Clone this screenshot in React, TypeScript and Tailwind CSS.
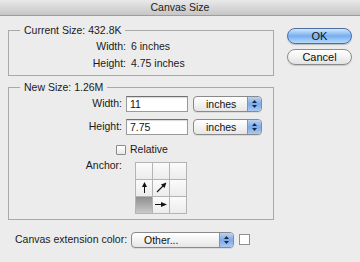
import React from 'react';

const font = { fontFamily: '"Liberation Sans", Arial, sans-serif' };

const SelectBox = ({ label, width }: { label: string; width: string }) => (
    <div
        className={`${width} h-[16px] flex items-stretch rounded-[4px] border border-[#8a8a8a] bg-gradient-to-b from-white to-[#e6e6e6] overflow-hidden shadow-[0_1px_0_rgba(0,0,0,0.08)]`}
    >
        <div className="flex-1 pl-[12px] leading-[14px] text-[#111]">{label}</div>
        <div className="w-[14px] border-l border-[#7c93b8] bg-gradient-to-b from-[#b9d3f3] via-[#7ea9e6] to-[#a9c9f2] flex flex-col items-center justify-center gap-[2px]">
            <svg width="5" height="3" viewBox="0 0 5 3">
                <path d="M0 3 L2.5 0 L5 3 Z" fill="#1b2a44" />
            </svg>
            <svg width="5" height="3" viewBox="0 0 5 3">
                <path d="M0 0 L2.5 3 L5 0 Z" fill="#1b2a44" />
            </svg>
        </div>
    </div>
);

const TextInput = ({ value }: { value: string }) => (
    <div className="w-[62px] h-[16px] border border-[#9a9a9a] border-t-[#6f6f6f] bg-white pl-[3px] leading-[14px] text-[#111] shadow-[inset_0_1px_1px_rgba(0,0,0,0.15)]">
        {value}
    </div>
);

const Cell = ({ children, shaded }: { children?: React.ReactNode; shaded?: boolean }) => (
    <div
        className={`h-[17px] w-[17px] flex items-center justify-center border-r border-b border-[#b4b4b4] ${
            shaded ? 'bg-gradient-to-b from-[#8f8f8f] to-[#c9c9c9]' : 'bg-gradient-to-b from-[#fbfbfb] to-[#ececec]'
        }`}
    >
        {children}
    </div>
);

export default function App() {
    return (
        <div className="w-[360px] h-[262px] overflow-hidden bg-[#ececec] text-[10.5px] text-[#1a1a1a]" style={font}>
            <div className="h-[16px] border-b border-[#9d9d9d] bg-gradient-to-b from-[#e9e9e9] to-[#c6c6c6] flex items-center justify-center text-[#222]">
                Canvas Size
            </div>
            <div className="flex">
                {/* left column */}
                <div className="ml-[8px] w-[266px]">
                    <fieldset className="mt-[8px] border border-[#a9a9a9] pb-[3px]">
                        <legend className="ml-[11px] px-[4px] leading-[13px]">Current Size: 432.8K</legend>
                        <div className="grid grid-cols-[117px_1fr] gap-x-[5px] leading-[17px] pt-[1px]">
                            <div className="text-right">Width:</div>
                            <div>6 inches</div>
                            <div className="text-right">Height:</div>
                            <div>4.75 inches</div>
                        </div>
                    </fieldset>
                    <fieldset className="mt-[5px] border border-[#a9a9a9] pb-[5px]">
                        <legend className="ml-[11px] px-[4px] leading-[13px]">New Size: 1.26M</legend>
                        <div className="pt-[2px] flex flex-col gap-[7px]">
                            <div className="flex items-center">
                                <div className="w-[117px] text-right pr-[4px]">Width:</div>
                                <TextInput value="11" />
                                <div className="w-[5px]" />
                                <SelectBox label="inches" width="w-[69px]" />
                            </div>
                            <div className="flex items-center">
                                <div className="w-[117px] text-right pr-[4px]">Height:</div>
                                <TextInput value="7.75" />
                                <div className="w-[5px]" />
                                <SelectBox label="inches" width="w-[69px]" />
                            </div>
                            <div className="flex items-center pl-[107px] gap-[4px]">
                                <div className="w-[10px] h-[10px] border border-[#8a8a8a] bg-gradient-to-b from-white to-[#e8e8e8] rounded-[1px]" />
                                <span>Relative</span>
                            </div>
                            <div className="flex items-start -mt-[3px]">
                                <div className="w-[117px] text-right pr-[4px] -mt-[4px]">Anchor:</div>
                                <div className="ml-[9px] grid grid-cols-3 border-l border-t border-[#b4b4b4]">
                                    <Cell />
                                    <Cell />
                                    <Cell />
                                    <Cell>
                                        <svg width="9" height="11" viewBox="0 0 9 11">
                                            <path d="M4.5 11 V3" stroke="#111" strokeWidth="1" />
                                            <path d="M2 5 L4.5 0 L7 5 Z" fill="#111" />
                                        </svg>
                                    </Cell>
                                    <Cell>
                                        <svg width="11" height="11" viewBox="0 0 11 11">
                                            <path d="M1 10 L7 4" stroke="#111" strokeWidth="1.1" />
                                            <path d="M10.5 0.5 L5 2.5 L8.5 6 Z" fill="#111" />
                                        </svg>
                                    </Cell>
                                    <Cell />
                                    <Cell shaded />
                                    <Cell>
                                        <svg width="12" height="7" viewBox="0 0 12 7">
                                            <path d="M0 3.5 H8" stroke="#111" strokeWidth="1" />
                                            <path d="M6 1 L12 3.5 L6 6 Z" fill="#111" />
                                        </svg>
                                    </Cell>
                                    <Cell />
                                </div>
                            </div>
                        </div>
                    </fieldset>
                    <div className="mt-[12px] flex items-center">
                        <div className="w-[123px] pl-[7px] whitespace-nowrap">Canvas extension color:</div>
                        <SelectBox label="Other..." width="w-[103px]" />
                        <div className="ml-[5px] w-[11px] h-[11px] border border-[#8f8f8f] bg-white" />
                    </div>
                </div>
                {/* right column */}
                <div className="ml-[13px] mt-[12px] flex flex-col gap-[5px] text-[11px]">
                    <div className="w-[65px] h-[16px] rounded-full border border-[#4a6fa5] bg-gradient-to-b from-[#d3e6fb] via-[#75aef0] to-[#b8dafc] flex items-center justify-center text-[#111] shadow-[0_1px_1px_rgba(0,0,0,0.2)]">
                        OK
                    </div>
                    <div className="w-[65px] h-[16px] rounded-full border border-[#8c8c8c] bg-gradient-to-b from-white via-[#f2f2f2] to-[#e2e2e2] flex items-center justify-center text-[#111] shadow-[0_1px_1px_rgba(0,0,0,0.15)]">
                        Cancel
                    </div>
                </div>
            </div>
        </div>
    );
}
